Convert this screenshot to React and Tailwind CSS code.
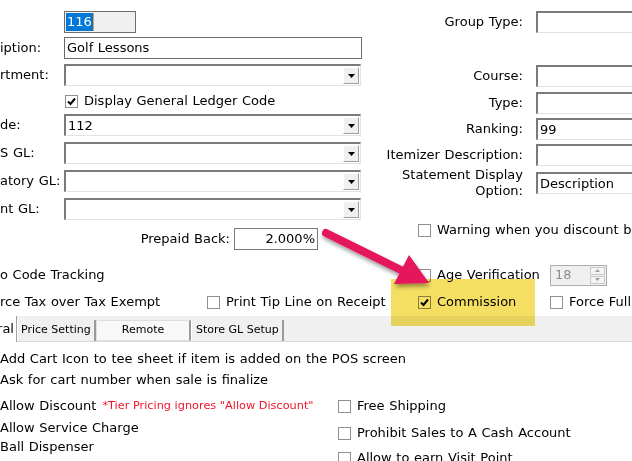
import React from "react";

const Check = ({ checked }) => (
  <span className="flex h-[13px] w-[13px] shrink-0 items-center justify-center border border-[#8f8f8f] bg-white">
    {checked && (
      <svg width="9" height="9" viewBox="0 0 9 9">
        <path d="M1 4.5 L3.5 7 L8 1.5" fill="none" stroke="#000" strokeWidth="2" />
      </svg>
    )}
  </span>
);

const CheckRow = ({ checked, label, className = "" }) => (
  <div className={"flex items-center gap-[6px] whitespace-nowrap " + className}>
    <Check checked={checked} />
    <span>{label}</span>
  </div>
);

const Sunken = ({ children, className = "" }) => (
  <div
    className={
      "flex h-[22px] items-center border-t-2 border-l-2 border-r border-b border-t-[#7a7a7a] border-l-[#7a7a7a] border-r-[#e3e3e3] border-b-[#e3e3e3] bg-white pl-[2px] whitespace-nowrap " +
      className
    }
  >
    {children}
  </div>
);

const Select = ({ value }) => (
  <Sunken className="w-[297px]">
    <span>{value}</span>
    <span className="ml-auto mr-[1px] flex h-[17px] w-[16px] items-center justify-center border border-t-white border-l-white border-r-[#a0a0a0] border-b-[#a0a0a0] bg-[#f0f0f0]">
      <svg width="7" height="4" viewBox="0 0 7 4">
        <path d="M0 0 H7 L3.5 4 Z" fill="#000" />
      </svg>
    </span>
  </Sunken>
);

const LeftRow = ({ label, children, className = "" }) => (
  <div className={"flex h-[22px] items-center " + className}>
    <span className="w-[64px] shrink-0 whitespace-nowrap">{label}</span>
    {children}
  </div>
);

const RightRow = ({ label, children, className = "" }) => (
  <div className={"flex h-[22px] items-center " + className}>
    <span className="w-[153px] shrink-0 text-right leading-[16px]">{label}</span>
    <div className="ml-[13px]">{children}</div>
  </div>
);

export default function App() {
  return (
    <div className="relative h-[461px] w-[632px] overflow-hidden bg-white font-['DejaVu_Sans',Verdana,sans-serif] text-[13px] text-black [word-spacing:0.5px]">
      {/* upper form */}
      <div className="flex">
        <div className="flex w-[370px] shrink-0 flex-col pt-[11px]">
          <LeftRow label="">
            <div className="flex h-[22px] w-[72px] items-center border border-[#6e6e6e] bg-[#f0f0f0] pl-[1px]">
              <span className="bg-[#0078d7] px-[1px] leading-[18px] text-white">116</span>
              <span className="h-[18px] w-px bg-[#f59a3c]" />
            </div>
          </LeftRow>
          <LeftRow label="iption:" className="mt-[4px]">
            <div className="flex h-[22px] w-[298px] items-center border border-[#6b6b6b] pl-[2px]">Golf Lessons</div>
          </LeftRow>
          <LeftRow label="rtment:" className="mt-[5px]">
            <Select value="" />
          </LeftRow>
          <div className="mt-[4px] flex h-[22px] items-center pl-[65px]">
            <CheckRow checked label="Display General Ledger Code" className="gap-[5px]" />
          </div>
          <LeftRow label="de:" className="mt-[2px]">
            <Select value="112" />
          </LeftRow>
          <LeftRow label="S GL:" className="mt-[6px]">
            <Select value="" />
          </LeftRow>
          <LeftRow label="atory GL:" className="mt-[6px]">
            <Select value="" />
          </LeftRow>
          <LeftRow label="nt GL:" className="mt-[6px]">
            <Select value="" />
          </LeftRow>
          <div className="mt-[8px] flex h-[22px] items-center">
            <span className="w-[230px] shrink-0 text-right">Prepaid Back:</span>
            <div className="ml-[4px] flex h-[22px] w-[84px] items-center justify-end border border-[#7a7a7a] pr-[2px]">2.000%</div>
          </div>
        </div>

        <div className="flex flex-1 flex-col pt-[11px]">
          <RightRow label="Group Type:">
            <Sunken className="w-[120px]" />
          </RightRow>
          <RightRow label="Course:" className="mt-[32px]">
            <Sunken className="w-[120px]" />
          </RightRow>
          <RightRow label="Type:" className="mt-[5px]">
            <Sunken className="w-[120px]" />
          </RightRow>
          <RightRow label="Ranking:" className="mt-[4px]">
            <Sunken className="w-[120px]">99</Sunken>
          </RightRow>
          <RightRow label="Itemizer Description:" className="mt-[4px]">
            <Sunken className="w-[120px]" />
          </RightRow>
          <RightRow
            label={
              <>
                Statement Display
                <br />
                Option:
              </>
            }
            className="mt-[6px]"
          >
            <Sunken className="w-[120px]">Description</Sunken>
          </RightRow>
          <div className="mt-[27px] flex h-[18px] items-center pl-[48px]">
            <CheckRow label="Warning when you discount below cost" />
          </div>
        </div>
      </div>

      {/* option rows */}
      <div className="mt-[14px] flex h-[22px] items-center whitespace-nowrap">
        <span className="w-[418px] shrink-0">o Code Tracking</span>
        <CheckRow label="Age Verification" className="w-[132px] shrink-0" />
        <div className="flex h-[21px] w-[57px] items-center border border-[#acacac] bg-[#f0f0f0]">
          <span className="pl-[4px] text-[#8d8d8d]">18</span>
          <div className="ml-auto mr-px flex flex-col gap-px">
            <span className="flex h-[8px] w-[15px] items-center justify-center border border-[#c8c8c8] bg-[#f4f4f4]">
              <svg width="5" height="3" viewBox="0 0 5 3">
                <path d="M0 3 H5 L2.5 0 Z" fill="#a0a0a0" />
              </svg>
            </span>
            <span className="flex h-[8px] w-[15px] items-center justify-center border border-[#c8c8c8] bg-[#f4f4f4]">
              <svg width="5" height="3" viewBox="0 0 5 3">
                <path d="M0 0 H5 L2.5 3 Z" fill="#a0a0a0" />
              </svg>
            </span>
          </div>
        </div>
      </div>
      <div className="mt-[5px] flex h-[22px] items-center whitespace-nowrap">
        <span className="w-[207px] shrink-0">rce Tax over Tax Exempt</span>
        <CheckRow label="Print Tip Line on Receipt" className="w-[211px] shrink-0 gap-[5px]" />
        <CheckRow checked label="Commission" className="w-[132px] shrink-0" />
        <CheckRow label="Force Full Payment" />
      </div>

      {/* tabs */}
      <div className="mt-[3px] flex h-[26px] items-start border-b border-[#d9d9d9] bg-[#f0f0f0] text-[11px] whitespace-nowrap [word-spacing:0px]">
        <div className="-mb-px flex h-[26px] w-[17px] items-center justify-end border-r border-[#a0a0a0] bg-white pr-[2px] text-[13px]">ral</div>
        <div className="mt-[4px] flex h-[21px] w-[79px] items-center border-l border-r-2 border-l-white border-r-[#9a9a9a] pl-[3px]">Price Setting</div>
        <div className="mt-[4px] flex h-[21px] w-[95px] items-center justify-center border border-r-2 border-[#dedede] border-r-[#9a9a9a] bg-[#f8f8f8]">Remote</div>
        <div className="mt-[4px] flex h-[21px] w-[93px] items-center border-l border-r-2 border-l-white border-r-[#9a9a9a] pl-[4px]">Store GL Setup</div>
      </div>

      {/* tab content */}
      <div className="flex whitespace-nowrap">
        <div className="flex w-[338px] shrink-0 flex-col">
          <div className="mt-[8px] flex h-[18px] items-center">Add Cart Icon to tee sheet if item is added on the POS screen</div>
          <div className="mt-[3px] flex h-[18px] items-center">Ask for cart number when sale is finalize</div>
          <div className="mt-[8px] flex h-[18px] items-center">
            <span>Allow Discount</span>
            <span className="ml-[6px] text-[11.3px] text-[#f0142c] [word-spacing:0px]">*Tier Pricing ignores "Allow Discount"</span>
          </div>
          <div className="mt-[4px] flex h-[18px] items-center">Allow Service Charge</div>
          <div className="mt-px flex h-[18px] items-center">Ball Dispenser</div>
        </div>
        <div className="flex flex-col">
          <CheckRow label="Free Shipping" className="mt-[55px] h-[18px]" />
          <CheckRow label="Prohibit Sales to A Cash Account" className="mt-[9px] h-[18px] gap-[5px]" />
          <CheckRow label="Allow to earn Visit Point" className="mt-[7px] h-[18px] gap-[5px]" />
        </div>
      </div>

      {/* highlight + arrow annotation */}
      <div className="pointer-events-none absolute left-[391px] top-[279px] h-[47px] w-[144px] bg-[#f4df62] mix-blend-multiply" />
      <svg className="pointer-events-none absolute left-0 top-0" width="632" height="461" viewBox="0 0 632 461">
        <defs>
          <filter id="sh" x="-20%" y="-20%" width="140%" height="160%">
            <feDropShadow dx="1" dy="3" stdDeviation="2" floodColor="#000" floodOpacity="0.4" />
          </filter>
        </defs>
        <g filter="url(#sh)" fill="#e5135c" stroke="none">
          <path d="M326 233 L403 271" stroke="#e5135c" strokeWidth="8" strokeLinecap="round" />
          <polygon points="409,255 429,283 394,284" />
        </g>
      </svg>
    </div>
  );
}
